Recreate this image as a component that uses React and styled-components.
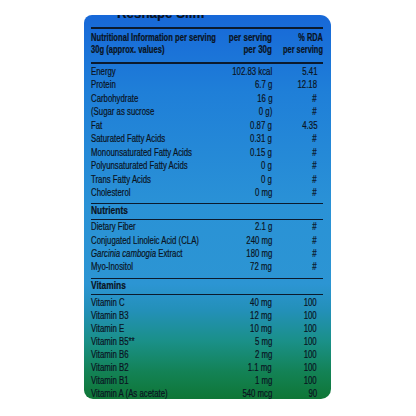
import React from "react";
import styled, { createGlobalStyle } from "styled-components";

const GlobalStyle = createGlobalStyle`
  html, body {
    margin: 0;
    padding: 0;
    background: #ffffff;
  }
  body {
    font-family: "Liberation Sans", Arial, sans-serif;
  }
`;

const Page = styled.div`
  width: 416px;
  height: 416px;
  padding: 15px 0 0 84px;
  box-sizing: border-box;
  overflow: hidden;
`;

const Card = styled.div`
  width: 247px;
  height: 384px;
  box-sizing: border-box;
  padding: 0 8px 0 7px;
  overflow: hidden;
  border-radius: 8px 11px 10px 9px;
  color: #0a1322;
  font-size: 10px;
  -webkit-text-stroke: 0.2px #0a1322;
  background: linear-gradient(
    180deg,
    #1768d8 0%,
    #1f7fd8 20%,
    #2a92d6 50%,
    #2c95d3 70%,
    #2390b8 77%,
    #1a9088 85%,
    #138255 93%,
    #0f7636 100%
  );
`;

const Title = styled.div`
  margin: -9px 0 0 26px;
  height: 14px;
  font-weight: bold;
  font-size: 14px;
  line-height: 14px;
`;

const Rule = styled.div`
  height: 1.5px;
  background: #0b1a2e;
  margin: ${(p) => p.$m || "0"};
`;

const Grid = styled.div`
  display: grid;
  grid-template-columns: minmax(0, 1fr) 50px 50px;
`;

const HeadCell = styled.div`
  display: flex;
  justify-content: ${(p) => (p.$right ? "flex-end" : "flex-start")};
  font-weight: bold;
  line-height: 12px;
  white-space: nowrap;
  text-align: ${(p) => (p.$right ? "right" : "left")};
  padding-right: ${(p) => p.$pr || "0"};
`;

const Cell = styled.div`
  display: flex;
  justify-content: ${(p) => (p.$right ? "flex-end" : "flex-start")};
  line-height: ${(p) => p.$h}px;
  height: ${(p) => p.$h}px;
  white-space: nowrap;
  padding-right: ${(p) => p.$pr || "0"};
`;

const Narrow = styled.span`
  display: inline-block;
  flex: none;
  transform: scaleX(${(p) => p.$sx || 0.78});
  transform-origin: ${(p) => (p.$right ? "right" : "left")} center;
`;

const Section = styled.div`
  font-weight: bold;
  font-size: 10.5px;
  line-height: 12px;
`;

const macros = [
  ["Energy", "102.83 kcal", "5.41"],
  ["Protein", "6.7 g", "12.18"],
  ["Carbohydrate", "16 g", "#"],
  ["(Sugar as sucrose", "0 g)", "#"],
  ["Fat", "0.87 g", "4.35"],
  ["Saturated Fatty Acids", "0.31 g", "#"],
  ["Monounsaturated Fatty Acids", "0.15 g", "#"],
  ["Polyunsaturated Fatty Acids", "0 g", "#"],
  ["Trans Fatty Acids", "0 g", "#"],
  ["Cholesterol", "0 mg", "#"],
];

const nutrients = [
  [<>Dietary Fiber</>, "2.1 g", "#"],
  [<>Conjugated Linoleic Acid (CLA)</>, "240 mg", "#"],
  [<><i>Garcinia cambogia</i> Extract</>, "180 mg", "#"],
  [<>Myo-Inositol</>, "72 mg", "#"],
];

const vitamins = [
  ["Vitamin C", "40 mg", "100"],
  ["Vitamin B3", "12 mg", "100"],
  ["Vitamin E", "10 mg", "100"],
  ["Vitamin B5**", "5 mg", "100"],
  ["Vitamin B6", "2 mg", "100"],
  ["Vitamin B2", "1.1 mg", "100"],
  ["Vitamin B1", "1 mg", "100"],
  ["Vitamin A (As acetate)", "540 mcg", "90"],
];

const Rows = ({ rows, h = 13.4 }) => (
  <Grid>
    {rows.map(([label, amount, rda], i) => (
      <React.Fragment key={i}>
        <Cell $h={h}>
          <Narrow>{label}</Narrow>
        </Cell>
        <Cell $h={h} $right $pr="1px">
          <Narrow $right>{amount}</Narrow>
        </Cell>
        <Cell $h={h} $right $pr="6px">
          <Narrow $right>{rda}</Narrow>
        </Cell>
      </React.Fragment>
    ))}
  </Grid>
);

const App = () => (
  <Page>
    <GlobalStyle />
    <Card>
      <Title>
        <Narrow $sx={0.95}>Reshape Slim</Narrow>
      </Title>
      <Rule $m="7px 0 3.5px 0" />
      <Grid>
        <HeadCell>
          <Narrow $sx={0.76}>
            Nutritional Information per serving
            <br />
            30g (approx. values)
          </Narrow>
        </HeadCell>
        <HeadCell $right $pr="1px">
          <Narrow $right $sx={0.8}>
            per serving
            <br />
            per 30g
          </Narrow>
        </HeadCell>
        <HeadCell $right>
          <Narrow $right $sx={0.74}>
            % RDA
            <br />
            per serving
          </Narrow>
        </HeadCell>
      </Grid>
      <Rule $m="6px 0 1.2px 0" />
      <Rows rows={macros} h={13.5} />
      <Rule $m="3px 0 0 0" />
      <Section>
        <Narrow $sx={0.8}>Nutrients</Narrow>
      </Section>
      <Rule $m="2.5px 0 0 0" />
      <Rows rows={nutrients} />
      <Rule $m="4px 0 0 0" />
      <Section>
        <Narrow $sx={0.8}>Vitamins</Narrow>
      </Section>
      <Rule $m="2.5px 0 0.8px 0" />
      <Rows rows={vitamins} h={13} />
    </Card>
  </Page>
);

export default App;
